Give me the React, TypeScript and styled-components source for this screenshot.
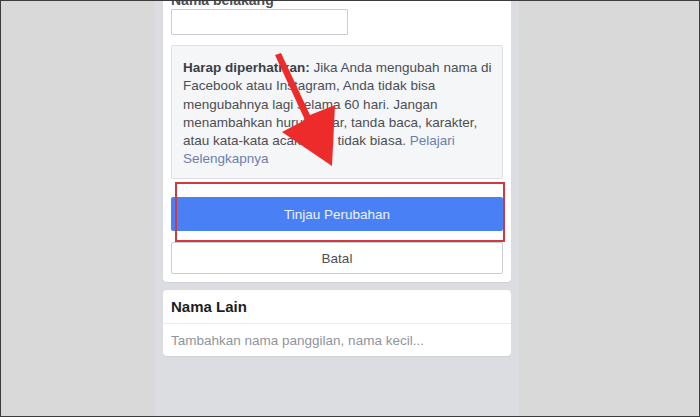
import React from "react";
import styled, { createGlobalStyle } from "styled-components";

const Global = createGlobalStyle`
  html, body { margin: 0; padding: 0; }
  body { font-family: "Liberation Sans", Arial, sans-serif; }
`;

const Frame = styled.div`
  width: 700px;
  height: 417px;
  box-sizing: border-box;
  border: 1px solid #3c3c3c;
  background: #d9d9d9;
  overflow: hidden;
  display: flex;
  padding-left: 154px;
`;

const Column = styled.div`
  width: 364px;
  box-sizing: border-box;
  background: #dcdde0;
  padding: 0 8px;
  display: flex;
  flex-direction: column;
  gap: 8px;
`;

const Card = styled.div<{ $top?: boolean }>`
  position: relative;
  background: #ffffff;
  border-radius: ${(p) => (p.$top ? "0 0 4px 4px" : "4px")};
  box-shadow: 0 1px 1px rgba(0, 0, 0, 0.06);
  padding: ${(p) => (p.$top ? "0 8px 8px" : "0")};
  display: flex;
  flex-direction: column;
`;

const Label = styled.div`
  margin-top: -9px;
  height: 16px;
  font-size: 14px;
  font-weight: bold;
  color: #4b4f56;
`;

const Input = styled.div`
  margin-top: 1px;
  width: 177px;
  height: 26px;
  box-sizing: border-box;
  border: 1px solid #c9ccd1;
  border-radius: 1px;
`;

const Note = styled.div`
  margin-top: 10px;
  box-sizing: border-box;
  height: 134px;
  background: #f5f6f7;
  border: 1px solid #dddfe2;
  border-radius: 2px;
  padding: 13px 11px 0;
  font-size: 13.5px;
  line-height: 18.3px;
  color: #4b4f56;
  white-space: nowrap;
`;

const Strong = styled.b`
  color: #3b3e44;
`;

const Link = styled.span`
  color: #6a7fb0;
`;

const Actions = styled.div`
  position: relative;
  margin-top: 18px;
  display: flex;
  flex-direction: column;
  gap: 11px;
`;

const Button = styled.div<{ $primary?: boolean }>`
  height: ${(p) => (p.$primary ? "34px" : "32px")};
  box-sizing: border-box;
  display: flex;
  align-items: center;
  justify-content: center;
  font-size: 13.5px;
  border-radius: 2px;
  background: ${(p) => (p.$primary ? "#4a80f6" : "#ffffff")};
  color: ${(p) => (p.$primary ? "#eef3ff" : "#4b4f56")};
  border: ${(p) => (p.$primary ? "none" : "1px solid #c9ccd1")};
`;

const Highlight = styled.div`
  position: absolute;
  left: 4px;
  top: -15px;
  width: 330px;
  height: 60px;
  box-sizing: border-box;
  border: 2px solid #d2383f;
  pointer-events: none;
`;

const Arrow = styled.svg`
  position: absolute;
  left: 0;
  top: 0;
  overflow: visible;
  pointer-events: none;
`;

const Header = styled.div`
  height: 34px;
  box-sizing: border-box;
  padding: 0 8px;
  display: flex;
  align-items: center;
  font-size: 15px;
  font-weight: bold;
  color: #1c1e21;
  border-bottom: 1px solid #e9ebee;
`;

const Hint = styled.div`
  height: 32px;
  padding: 0 8px;
  display: flex;
  align-items: center;
  font-size: 13.5px;
  color: #90949c;
`;

export default function App() {
  return (
    <>
      <Global />
      <Frame>
        <Column>
          <Card $top>
            <Label>Nama belakang</Label>
            <Input />
            <Note>
              <Strong>Harap diperhatikan:</Strong> Jika Anda mengubah nama di
              <br />
              Facebook atau Instagram, Anda tidak bisa
              <br />
              mengubahnya lagi selama 60 hari. Jangan
              <br />
              menambahkan huruf besar, tanda baca, karakter,
              <br />
              atau kata-kata acak yang tidak biasa. <Link>Pelajari</Link>
              <br />
              <Link>Selengkapnya</Link>
            </Note>
            <Actions>
              <Button $primary>Tinjau Perubahan</Button>
              <Button>Batal</Button>
              <Highlight />
            </Actions>
            <Arrow width="1" height="1">
              <polygon
                points="112,54 118,52 147,114 172,104 169,165 119,131 142,119"
                fill="#ee2b2b"
              />
            </Arrow>
          </Card>
          <Card>
            <Header>Nama Lain</Header>
            <Hint>Tambahkan nama panggilan, nama kecil...</Hint>
          </Card>
        </Column>
      </Frame>
    </>
  );
}
